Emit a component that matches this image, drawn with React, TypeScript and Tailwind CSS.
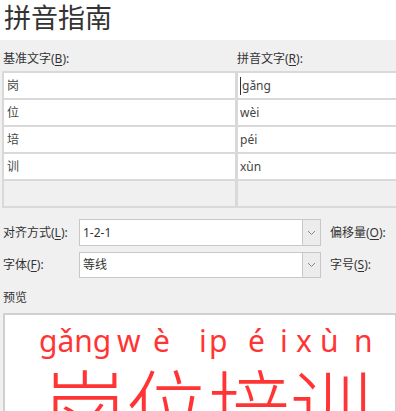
import React from 'react';

const ui = "font-['Noto_Sans','Noto_Sans_CJK_SC',sans-serif]";

function Acc({ c }: { c: string }) {
  return <span className="underline underline-offset-[2px] decoration-[1px]">{c}</span>;
}

function Chevron() {
  return (
    <svg width="9" height="6" viewBox="0 0 9 6" fill="none">
      <polyline points="1,1 4.5,4.5 8,1" stroke="#8a8a8a" strokeWidth="1" />
    </svg>
  );
}

function Dropdown({ value, h }: { value: string; h: string }) {
  return (
    <div className={`${h} w-[242px] flex border border-[#c8c8c8] bg-white`}>
      <div className="flex-1 flex items-center pl-[3px] text-[12px] text-[#333]">{value}</div>
      <div className="w-[18px] flex items-center justify-center border-l border-[#c8c8c8] bg-[#ececec]">
        <Chevron />
      </div>
    </div>
  );
}

const rows = [
  ['岗', 'gǎng'],
  ['位', 'wèi'],
  ['培', 'péi'],
  ['训', 'xùn'],
  ['', ''],
];

// ruby letters, each in a box so the 1-2-1 spread lines up over the base text
const ruby: [string, string][] = [
  ['gǎng', 'w-[78px]'],
  ['w', 'w-[36px]'],
  ['è', 'w-[46px]'],
  ['i', 'w-[10px]'],
  ['p', 'w-[39px]'],
  ['é', 'w-[32px]'],
  ['i', 'w-[16px]'],
  ['x', 'w-[24px]'],
  ['ù', 'w-[34px]'],
  ['n', 'w-[30px]'],
];

export default function App() {
  return (
    <div className={`w-[396px] h-[411px] overflow-hidden bg-[#f0f0f0] ${ui}`}>
      {/* Title */}
      <div className="h-[40px] bg-white pl-[4px] pt-[3px] text-[27px] leading-[27px] text-[#333] font-['Noto_Sans_CJK_SC',sans-serif]">
        拼音指南
      </div>

      {/* Column labels */}
      <div className="h-[31px] flex pt-[11px] text-[12px] leading-[16px] text-[#333]">
        <div className="w-[237px] pl-[3px]">
          基准文字(<Acc c="B" />):
        </div>
        <div>
          拼音文字(<Acc c="R" />):
        </div>
      </div>

      {/* Table */}
      <div className="ml-[2px] w-[400px] bg-[#d9d9d9] p-[2px] grid grid-cols-[231px_1fr] gap-x-[3px] gap-y-[2px]">
        {rows.map(([base, py], i) => {
          const last = i === rows.length - 1;
          const bg = last ? 'bg-[#f0f0f0]' : 'bg-white';
          return (
            <React.Fragment key={i}>
              <div className={`h-[25px] ${bg} flex items-center pl-[3px] text-[12px] text-[#444]`}>{base}</div>
              <div className={`h-[25px] ${bg} flex items-center pl-[2px] text-[12px] text-[#444]`}>
                {i === 0 && <span className="w-[1px] h-[18px] bg-[#333] mr-[1px]" />}
                <span>{py}</span>
              </div>
            </React.Fragment>
          );
        })}
      </div>

      {/* Alignment / font */}
      <div className="mt-[11px] flex items-center text-[12px] text-[#333]">
        <div className="w-[79px] pl-[3px]">
          对齐方式(<Acc c="L" />):
        </div>
        <Dropdown value="1-2-1" h="h-[27px]" />
        <div className="ml-[9px]">
          偏移量(<Acc c="O" />):
        </div>
      </div>
      <div className="mt-[6px] flex items-center text-[12px] text-[#333]">
        <div className="w-[79px] pl-[3px]">
          字体(<Acc c="F" />):
        </div>
        <Dropdown value="等线" h="h-[26px]" />
        <div className="ml-[9px]">
          字号(<Acc c="S" />):
        </div>
      </div>

      {/* Preview */}
      <div className="mt-[12px] pl-[3px] text-[12px] leading-[16px] text-[#333]">预览</div>
      <div className="mt-[7px] ml-[3px] w-[394px] h-[110px] border-2 border-[#d0d0d0] bg-white text-[#ff3535] overflow-hidden">
        <div className="pt-[10px] pl-[34px] flex text-[30px] leading-[32px] font-['Noto_Sans',sans-serif] whitespace-nowrap">
          {ruby.map(([t, w], i) => (
            <span key={i} className={`${w} shrink-0`}>
              {t}
            </span>
          ))}
        </div>
        <div className="mt-[6px] pl-[39px] text-[82px] leading-[82px] font-light font-['Noto_Sans_CJK_SC',sans-serif] whitespace-nowrap">
          岗位培训
        </div>
      </div>
    </div>
  );
}
